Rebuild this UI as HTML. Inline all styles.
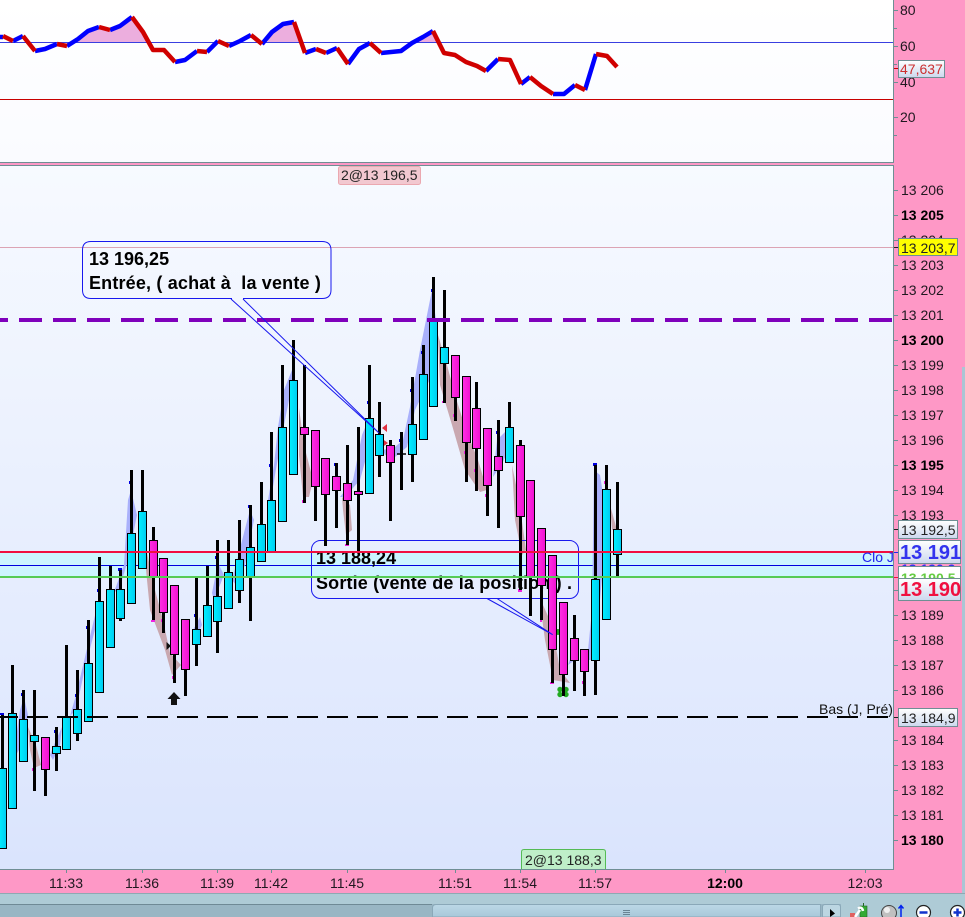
<!DOCTYPE html>
<html><head><meta charset="utf-8"><style>
html,body{margin:0;padding:0;background:#fe98c6}
svg{display:block;position:absolute;left:0;top:0}
text{font-family:"Liberation Sans",sans-serif;font-size:14px;white-space:pre}
.ax{fill:#201820}
.b{font-weight:bold;fill:#000}
.cl{font-weight:bold;font-size:18px;fill:#000}
.t{text-anchor:middle}
</style></head><body>
<svg width="965" height="917" viewBox="0 0 965 917" xmlns="http://www.w3.org/2000/svg">
<defs>
<linearGradient id="p1" x1="0" y1="0" x2="0" y2="1"><stop offset="0" stop-color="#fff"/><stop offset="1" stop-color="#fafbff"/></linearGradient>
<linearGradient id="p2" x1="0" y1="0" x2="0" y2="1"><stop offset="0" stop-color="#f7faff"/><stop offset="1" stop-color="#dae4fd"/></linearGradient>
<linearGradient id="cy" x1="0" y1="0" x2="1" y2="0"><stop offset="0" stop-color="#00f0ff"/><stop offset="1" stop-color="#00ccf2"/></linearGradient>
<linearGradient id="mg" x1="0" y1="0" x2="1" y2="0"><stop offset="0" stop-color="#ff30e4"/><stop offset="1" stop-color="#f010d0"/></linearGradient>
<linearGradient id="bx" x1="0" y1="0" x2="0" y2="1"><stop offset="0" stop-color="#fff"/><stop offset="1" stop-color="#ccd8ee"/></linearGradient>
<linearGradient id="th" x1="0" y1="0" x2="0" y2="1"><stop offset="0" stop-color="#bcd8e6"/><stop offset="1" stop-color="#a8c8da"/></linearGradient>
</defs>

<rect width="965" height="917" fill="#fe98c6"/>
<rect x="962" y="367" width="3" height="526" fill="#a9c6d4"/>

<!-- RSI pane -->
<rect x="0" y="0" width="893" height="162" fill="url(#p1)"/>
<rect x="0" y="162" width="894" height="1" fill="#6f8e94"/>
<rect x="893" y="0" width="1" height="163" fill="#6f8e94"/>
<g fill="#ecaede">
<polygon points="76,42.5 88,31 99,27 110,30 120,26 132,17 143,32 149,42.5"/>
<polygon points="267,42.5 272,32 283,24 294,22 301,42.5"/>
<polygon points="416,42.5 423,37 433,31 439,42.5"/>
</g>
<path d="M0 42.5H893" stroke="#3a3fe0" stroke-width="1"/>
<path d="M0 99.5H893" stroke="#c80000" stroke-width="1"/>
<g fill="none" stroke-width="4.5" stroke-linejoin="round">
<path stroke="#0000ff" d="M0 37H3M13 41L23 36M35 51L45 49L57 44M67 46L78 39L88 31L99 27M110 30L120 26L132 17M175 62L185 60L197 51M207 52L218 41M229 46L240 41L251 35M262 44L272 32L283 24L294 22M305 53L316 49M326 53L337 48M348 64L359 49L370 43M381 53L401 51L412 43L423 37L433 31M486 71L498 59M521 84L530 77M553 94L564 94L575 85M585 90L596 54"/>
<path stroke="#d00000" d="M3 36L13 41M23 36L35 51M57 44L67 46M99 27L110 30M132 17L143 32L153 50L164 50L175 62M197 51L207 52M218 41L229 46M251 35L262 44M294 22L305 53M316 49L326 53M337 48L348 64M370 43L381 53M433 31L444 53L455 55L466 62L477 66L486 71M498 59L510 60L521 84M530 77L541 86L553 94M575 85L585 90M596 54L607 56L617 67"/>
</g>

<!-- main pane -->
<rect x="0" y="166" width="893" height="703" fill="url(#p2)"/>
<rect x="0" y="165" width="894" height="1" fill="#6f8e94"/>
<rect x="893" y="165" width="1" height="704" fill="#6f8e94"/>
<rect x="0" y="869" width="894" height="1" fill="#6f8e94"/>

<path d="M0 247.5H893" stroke="#dca4b4" stroke-width="1"/>
<rect x="0" y="552" width="893" height="25" fill="#ccf5ff"/>
<path d="M0 565.5H893" stroke="#0000dd" stroke-width="1"/>

<!-- trend shading -->
<g fill="#a9b0fb">
<polygon points="13,760 20,710 24,697 28,715 22,745"/>
<polygon points="50,755 56,740 62,727 60,745 53,760"/>
<polygon points="70,716 76,695 85,657 97,607 100,600 97,622 85,668 76,710"/>
<polygon points="114,592 124,565 128,500 131,490 137,515 128,560 119,590"/>
<polygon points="193,630 200,617 202,625 195,640"/>
<polygon points="212,593 218,563 224,575 214,600"/>
<polygon points="232,580 246,525 250,510 254,520 245,565 236,585"/>
<polygon points="268,500 274,465 278,427 284,390 292,370 292,385 283,430 275,475 270,505"/>
<polygon points="340,497 353,480 362,435 369,418 371,440 360,480 345,497"/>
<polygon points="383,450 395,447 403,440 410,407 420,350 432,290 436,320 432,375 415,410 407,447 395,457 385,455"/>
<polygon points="493,477 497,440 505,432 510,445 503,462"/>
<polygon points="568,665 575,645 575,660"/>
<polygon points="587,660 592,610 594,470 600,475 607,520 600,600 597,660"/>
</g>
<g fill="#c9a8b0">
<polygon points="28,727 36,745 41,765 34,768 30,750"/>
<polygon points="147,553 155,590 163,620 170,653 181,665 172,675 165,650 150,610 146,570"/>
<polygon points="299,408 304,445 313,480 309,497 303,497 299,455"/>
<polygon points="342,497 350,505 352,530 346,535 343,510"/>
<polygon points="438,335 447,365 455,395 466,430 478,460 487,490 480,492 465,470 452,425 440,385"/>
<polygon points="512,465 519,500 526,550 522,555 515,520"/>
<polygon points="540,603 545,640 553,680 570,683 560,670 552,625 543,605"/>
<polygon points="610,505 617,530 612,530"/>
</g>

<!-- small ticks -->
<g fill="#0000e0">
<rect x="0" y="713" width="4" height="2"/><rect x="21" y="693" width="2" height="3"/><rect x="54" y="730" width="2" height="3"/><rect x="75" y="694" width="2" height="3"/><rect x="86" y="626" width="2" height="3"/><rect x="97" y="589" width="2" height="3"/><rect x="118" y="568" width="4" height="3"/><rect x="129" y="481" width="2" height="3"/><rect x="194" y="614" width="2" height="3"/><rect x="215" y="556" width="2" height="3"/><rect x="238" y="544" width="2" height="3"/><rect x="248" y="505" width="4" height="3"/><rect x="269" y="464" width="2" height="3"/><rect x="281" y="394" width="2" height="3"/><rect x="292" y="364" width="2" height="3"/><rect x="334" y="463" width="4" height="3"/><rect x="357" y="444" width="2" height="3"/><rect x="367" y="401" width="2" height="3"/><rect x="399" y="439" width="2" height="3"/><rect x="410" y="389" width="2" height="3"/><rect x="421" y="351" width="2" height="3"/><rect x="431" y="289" width="2" height="3"/><rect x="496" y="431" width="2" height="3"/><rect x="593" y="463" width="4" height="3"/>
</g>
<g fill="#f020e0">
<rect x="32" y="768" width="2" height="3"/><rect x="151" y="620" width="4" height="2"/><rect x="161" y="619" width="2" height="3"/><rect x="172" y="676" width="2" height="3"/><rect x="302" y="500" width="4" height="3"/><rect x="345" y="544" width="4" height="2"/><rect x="442" y="401" width="4" height="2"/><rect x="453" y="414" width="2" height="3"/><rect x="464" y="451" width="2" height="3"/><rect x="474" y="469" width="2" height="3"/><rect x="485" y="494" width="2" height="3"/><rect x="518" y="589" width="4" height="3"/><rect x="540" y="619" width="2" height="3"/><rect x="550" y="682" width="4" height="2"/><rect x="582" y="681" width="2" height="3"/><rect x="604" y="481" width="2" height="3"/><rect x="616" y="563" width="2" height="3"/><rect x="552" y="632" width="2" height="3"/>
</g>

<!-- callout 2 box and text are beneath the candles -->
<rect x="311.5" y="540.5" width="267" height="58" rx="9" fill="none" stroke="#1818ee" stroke-width="1"/>
<text class="cl" x="316" y="564">13 188,24</text>
<text class="cl" x="316" y="589" style="letter-spacing:.16px">Sortie (vente de la position ) .</text>

<!-- green marker under candles -->
<g fill="#22aa22"><circle cx="558" cy="632" r="3"/><circle cx="560" cy="689.5" r="2.7"/><circle cx="566" cy="689.5" r="2.7"/><circle cx="560" cy="694.5" r="2.7"/><circle cx="566" cy="694.5" r="2.7"/></g>
<path d="M381 438L388 443L381 448Z" fill="#e03040"/>

<!-- wicks -->
<path stroke="#000" stroke-width="3" fill="none" d="
M2.5 715V768M12.5 665V713M23.5 690V719M34.5 690V791M45.5 769V796M56.5 727V771M66.5 645V717M77.5 670V741M88.5 620V663M99.5 557V601M110.5 566V589M120.5 570V621M131.5 470V533M142.5 470V511M153.5 527V620M163.5 558V633M174.5 654V683M185.5 669V696M196.5 578V666M207.5 566V605M217.5 540V653M228.5 540V572M239.5 520V603M250.5 505V621M261.5 482V561M271.5 432V500M282.5 365V427M293.5 340V380M304.5 365V503M315.5 486V521M325.5 494V546M336.5 463V528M347.5 445V545M358.5 427V552M369.5 365V418M379.5 402V477M390.5 440V521M401.5 432V490M412.5 377V482M423.5 345V374M433.5 277V320M444.5 290V403M455.5 397V421M466.5 442V482M476.5 382V491M487.5 485V516M498.5 420V528M509.5 402V427M520.5 440V590M530.5 577V616M541.5 585V620M552.5 649V683M563.5 674V696M574.5 615V691M584.5 671V696M595.5 465V695M606.5 465V489M617.5 482V576"/>
<path stroke="#000" stroke-width="1.5" d="M397 454H406"/>

<!-- bodies cyan -->
<g fill="url(#cy)" stroke="#000" stroke-width="1">
<rect x="-1.5" y="768.5" width="8" height="80"/><rect x="8.5" y="713.5" width="8" height="95"/><rect x="19.5" y="719.5" width="8" height="42"/><rect x="30.5" y="735.5" width="8" height="6"/><rect x="52.5" y="746.5" width="8" height="7"/><rect x="62.5" y="717.5" width="8" height="32"/><rect x="73.5" y="709.5" width="8" height="24"/><rect x="84.5" y="663.5" width="8" height="58"/><rect x="95.5" y="601.5" width="8" height="91"/><rect x="106.5" y="589.5" width="8" height="58"/><rect x="116.5" y="589.5" width="8" height="29"/><rect x="127.5" y="533.5" width="8" height="70"/><rect x="138.5" y="511.5" width="8" height="57"/><rect x="192.5" y="629.5" width="8" height="15"/><rect x="203.5" y="605.5" width="8" height="31"/><rect x="213.5" y="596.5" width="8" height="25"/><rect x="224.5" y="572.5" width="8" height="36"/><rect x="235.5" y="559.5" width="8" height="31"/><rect x="246.5" y="547.5" width="8" height="29"/><rect x="257.5" y="524.5" width="8" height="37"/><rect x="267.5" y="500.5" width="8" height="51"/><rect x="278.5" y="427.5" width="8" height="94"/><rect x="289.5" y="380.5" width="8" height="94"/><rect x="365.5" y="418.5" width="8" height="75"/><rect x="375.5" y="434.5" width="8" height="21"/><rect x="408.5" y="424.5" width="8" height="30"/><rect x="419.5" y="374.5" width="8" height="65"/><rect x="429.5" y="320.5" width="8" height="86"/><rect x="440.5" y="347.5" width="8" height="16"/><rect x="505.5" y="427.5" width="8" height="35"/><rect x="591.5" y="579.5" width="8" height="81"/><rect x="602.5" y="489.5" width="8" height="130"/><rect x="613.5" y="529.5" width="8" height="25"/>
</g>
<!-- bodies magenta -->
<g fill="url(#mg)" stroke="#000" stroke-width="1">
<rect x="41.5" y="737.5" width="8" height="32"/><rect x="149.5" y="540.5" width="8" height="37"/><rect x="159.5" y="558.5" width="8" height="54"/><rect x="170.5" y="585.5" width="8" height="69"/><rect x="181.5" y="619.5" width="8" height="50"/><rect x="300.5" y="427.5" width="8" height="7"/><rect x="311.5" y="430.5" width="8" height="56"/><rect x="321.5" y="458.5" width="8" height="36"/><rect x="332.5" y="476.5" width="8" height="14"/><rect x="343.5" y="483.5" width="8" height="17"/><rect x="354.5" y="491.5" width="8" height="3"/><rect x="386.5" y="445.5" width="8" height="17"/><rect x="451.5" y="355.5" width="8" height="42"/><rect x="462.5" y="376.5" width="8" height="66"/><rect x="472.5" y="408.5" width="8" height="40"/><rect x="483.5" y="428.5" width="8" height="57"/><rect x="494.5" y="456.5" width="8" height="14"/><rect x="516.5" y="445.5" width="8" height="71"/><rect x="526.5" y="480.5" width="8" height="97"/><rect x="537.5" y="528.5" width="8" height="57"/><rect x="548.5" y="555.5" width="8" height="94"/><rect x="559.5" y="602.5" width="8" height="72"/><rect x="570.5" y="638.5" width="8" height="22"/><rect x="580.5" y="649.5" width="8" height="22"/>
</g>

<!-- horizontal overlays -->
<path d="M0 320H893" stroke="#7f00bb" stroke-width="4" stroke-dasharray="23 11" stroke-dashoffset="15"/>
<path d="M0 717H888" stroke="#000" stroke-width="2" stroke-dasharray="21 9" stroke-dashoffset="3"/>
<path d="M0 552H893" stroke="#f01040" stroke-width="2"/>
<path d="M0 577H893" stroke="#55cc55" stroke-width="2"/>

<!-- markers -->
<path d="M174 692L180.5 699H177V705H171V699H167.5Z" fill="#111"/>
<path d="M166.5 642L171 646L166.5 650Z" fill="#111"/>
<path d="M387 424V432L382 428Z" fill="#e03040"/>

<!-- callout 1 -->
<path d="M232 298.5H91Q82.5 298.5 82.5 290V250Q82.5 241.5 91 241.5H322Q331 241.5 331 250V290Q331 298.5 322 298.5H243" fill="none" stroke="#1818ee" stroke-width="1"/>
<path d="M231 299L379 433L243 299" fill="none" stroke="#1818ee" stroke-width="1"/>
<text class="cl" x="89" y="265">13 196,25</text>
<text class="cl" x="89" y="289" style="letter-spacing:.17px">Entrée, ( achat à  la vente )</text>
<path d="M487 598.5L552.7 634.7L497 598.5" fill="none" stroke="#1818ee" stroke-width="1"/>

<!-- trade labels -->
<rect x="338.5" y="166.5" width="82" height="18" rx="2" fill="#f2c8d0" stroke="#eba8b0"/>
<text x="341" y="180" fill="#222">2@13 196,5</text>
<path d="M521.5 869V852Q521.5 849.5 524 849.5H603Q605.5 849.5 605.5 852V869" fill="#bfeec8" stroke="#55bb55"/>
<text x="525" y="865" fill="#222">2@13 188,3</text>

<text x="862" y="562" fill="#2222ee">Clo J</text>
<text x="819" y="714" fill="#111">Bas (J, Pré)</text>

<!-- axis ticks -->
<path stroke="#6f8e94" stroke-width="1" d="M894 10.5H898M894 28.5H897M894 46.5H898M894 64.5H897M894 82.5H898M894 117.5H898M894 135.5H897M894 190.5H898M894 215.5H898M894 240.5H898M894 265.5H898M894 290.5H898M894 315.5H898M894 340.5H898M894 365.5H898M894 390.5H898M894 415.5H898M894 440.5H898M894 465.5H898M894 490.5H898M894 515.5H898M894 590.5H898M894 615.5H898M894 640.5H898M894 665.5H898M894 690.5H898M894 740.5H898M894 765.5H898M894 790.5H898M894 815.5H898M894 840.5H898"/>
<path stroke="#222" stroke-width="1" d="M894 247.5H898M894 529.5H898M894 717.5H898"/>
<path stroke="#2222ee" stroke-width="1" d="M894 552.5H898"/>
<path stroke="#f01040" stroke-width="1" d="M894 577.5H898"/>
<path stroke="#c00" stroke-width="1" d="M894 68.5H898"/>
<path stroke="#6f8e94" stroke-width="1" d="M66.5 869V873M142.5 869V873M217.5 869V873M271.5 869V873M347.5 869V873M455.5 869V873M520.5 869V873M595.5 869V873M725.5 869V873M865.5 869V873"/>

<!-- axis labels -->
<g class="ax">
<text x="900" y="15">80</text><text x="900" y="51">60</text><text x="900" y="87">40</text><text x="900" y="122">20</text>
<text x="901" y="195">13 206</text><text x="901" y="245">13 204</text><text x="901" y="270">13 203</text><text x="901" y="295">13 202</text><text x="901" y="320">13 201</text><text x="901" y="370">13 199</text><text x="901" y="395">13 198</text><text x="901" y="420">13 197</text><text x="901" y="445">13 196</text><text x="901" y="495">13 194</text><text x="901" y="520">13 193</text><text x="901" y="620">13 189</text><text x="901" y="645">13 188</text><text x="901" y="670">13 187</text><text x="901" y="695">13 186</text><text x="901" y="745">13 184</text><text x="901" y="770">13 183</text><text x="901" y="795">13 182</text><text x="901" y="820">13 181</text>
</g>
<g class="b">
<text class="b" x="901" y="220">13 205</text><text class="b" x="901" y="345">13 200</text><text class="b" x="901" y="470">13 195</text><text class="b" x="901" y="845">13 180</text>
</g>
<g class="ax t">
<text class="t ax" x="66" y="888">11:33</text><text class="t ax" x="142" y="888">11:36</text><text class="t ax" x="217" y="888">11:39</text><text class="t ax" x="271" y="888">11:42</text><text class="t ax" x="347" y="888">11:45</text><text class="t ax" x="455" y="888">11:51</text><text class="t ax" x="520" y="888">11:54</text><text class="t ax" x="595" y="888">11:57</text><text class="t b" x="725" y="888">12:00</text><text class="t ax" x="865" y="888">12:03</text>
</g>

<!-- price boxes -->
<rect x="898.5" y="60.5" width="46" height="17" fill="url(#bx)" stroke="#6f8e94"/>
<text x="900" y="74" fill="#cc3030">47,637</text>
<rect x="898.5" y="238.5" width="59" height="17" fill="#ffff00" stroke="#6f8e94"/>
<text x="901" y="253" fill="#222">13 203,7</text>
<rect x="898.5" y="520.5" width="59" height="18" fill="url(#bx)" stroke="#6f8e94"/>
<text x="901" y="535" fill="#222">13 192,5</text>
<text x="901" y="574" fill="#3333ee" style="font-weight:bold">13 190,9</text>
<rect x="898.5" y="566.5" width="62" height="13" fill="#fff" stroke="#6f8e94"/>
<text x="901" y="583" fill="#66cc44" style="font-weight:bold">13 190,5</text>
<rect x="898.5" y="540.5" width="62" height="23" fill="url(#bx)" stroke="#6f8e94"/>
<text x="900" y="559" fill="#3333ee" style="font-size:20px;font-weight:bold">13 191</text>
<rect x="898.5" y="578.5" width="62" height="22" fill="url(#bx)" stroke="#6f8e94"/>
<text x="900" y="596" fill="#f01040" style="font-size:20px;font-weight:bold">13 190</text>
<rect x="898.5" y="708.5" width="59" height="18" fill="url(#bx)" stroke="#6f8e94"/>
<text x="901" y="723" fill="#222">13 184,9</text>

<!-- bottom bar -->
<rect x="0" y="893" width="965" height="24" fill="#aecbd6"/>
<rect x="0" y="893" width="965" height="1" fill="#8fa8b2"/>
<rect x="0" y="904" width="965" height="13" fill="#99b6c4"/>
<rect x="0" y="904" width="432" height="1" fill="#6f8a96"/>
<rect x="841" y="904" width="124" height="13" fill="#aecbd6"/>
<path d="M432.5 917V908Q432.5 904.5 436 904.5H820.5V917Z" fill="url(#th)" stroke="#8aa8b8"/>
<path d="M623 910.5H630M623 912.5H630M623 914.5H630" stroke="#6a8494" stroke-width="1"/>
<path d="M822.5 917V907Q822.5 904.5 825 904.5H838Q840.5 904.5 840.5 907V917Z" fill="#bcd6e2" stroke="#8aa8b8"/>
<path d="M830 909L835 913.5L830 917Z" fill="#000"/>

<!-- toolbar icons -->
<rect x="850" y="913" width="5" height="4" fill="#e06060"/>
<rect x="860" y="906" width="7" height="11" fill="#33aa33" stroke="#226622" stroke-width="0.6"/>
<path d="M863.5 903V906" stroke="#226622"/>
<path d="M855 917L860 910M858 908.5Q862 906 863 911" stroke="#fff" stroke-width="2.5" fill="none"/>
<circle cx="889" cy="913" r="7.5" fill="#c0c0c0" stroke="#444" stroke-width="1"/>
<circle cx="887" cy="910" r="3" fill="#f0f0f0"/>
<path d="M901 906V917M898.5 908.5L901 905.500L903.5 908.500" stroke="#0022ee" stroke-width="1.5" fill="none"/>
<circle cx="923.5" cy="912.5" r="7" fill="#fff" stroke="#222" stroke-width="1.2"/>
<path d="M919.5 912.5H927.5" stroke="#1133cc" stroke-width="2.5"/>
<circle cx="957.5" cy="912.5" r="7" fill="#fff" stroke="#222" stroke-width="1.2"/>
<path d="M953.5 912.5H961.5M957.5 908.5V916.5" stroke="#1133cc" stroke-width="2.5"/>
</svg>
</body></html>
